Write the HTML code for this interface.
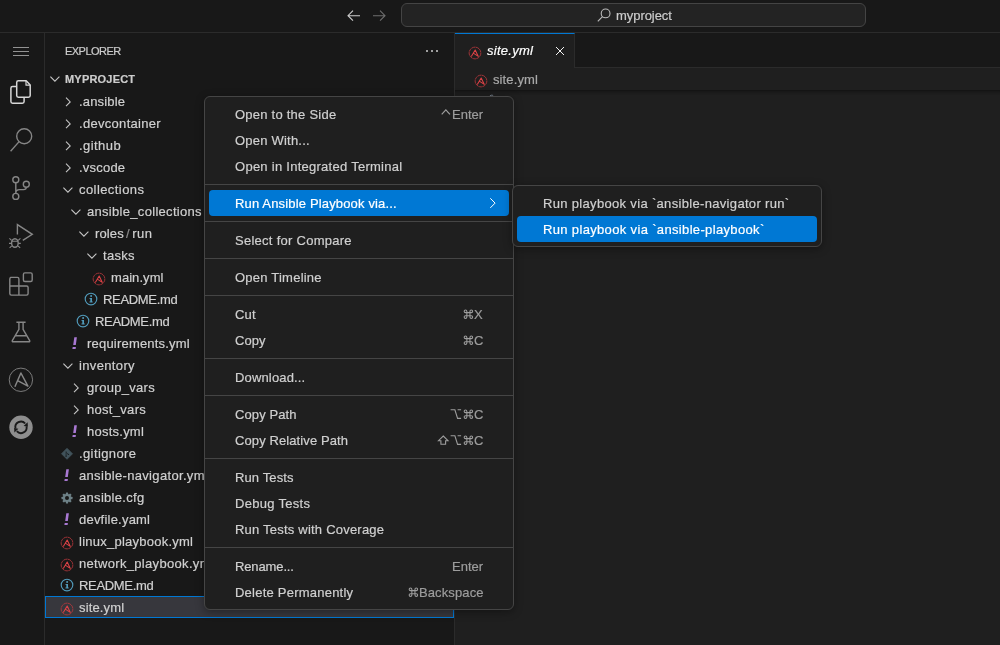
<!DOCTYPE html>
<html><head><meta charset="utf-8">
<style>
*{box-sizing:border-box;margin:0;padding:0}
html,body{width:1000px;height:645px;overflow:hidden;background:#181818;font-family:"Liberation Sans",sans-serif;font-size:13px;color:#ccc}
.t,.l,.g{will-change:transform;-webkit-text-stroke:0.2px}
.abs{position:absolute}
#title{position:absolute;left:0;top:0;width:1000px;height:33px;background:#181818;border-bottom:1px solid #2b2b2b}
#search{position:absolute;left:401px;top:3px;width:465px;height:24px;border:1px solid #444;border-radius:6px;background:#232323}
#search span{position:absolute;left:214.4px;top:4px;font-size:13px;color:#ccc;line-height:15px}
#act{position:absolute;left:0;top:33px;width:45px;height:612px;background:#181818;border-right:1px solid #2b2b2b}
#act svg{position:absolute}
#side{position:absolute;left:45px;top:33px;width:410px;height:612px;background:#181818;border-right:1px solid #2b2b2b}
#ed{position:absolute;left:455px;top:33px;width:545px;height:612px;background:#1f1f1f}
#tabs{position:absolute;left:0;top:0;width:545px;height:35px;background:#181818;border-bottom:1px solid #2b2b2b}
#tab{position:absolute;left:0;top:0;width:120px;height:35px;background:#1f1f1f;border-top:1px solid #0078d4;border-right:1px solid #2b2b2b}
#tab .t{position:absolute;left:32px;top:9px;font-style:italic;color:#fff;font-size:13px;line-height:15px}
#tab svg,#bc svg{position:absolute}
#bc{position:absolute;left:0;top:35px;width:545px;height:22px;background:#1f1f1f;}
#shadow{position:absolute;left:0;top:56px;width:545px;height:6px;box-shadow:inset 0 6px 6px -6px #000}
#bc .t{position:absolute;left:38px;top:4px;color:#a9a9a9;font-size:13px;line-height:15px}
.row{position:absolute;left:0;width:409px;height:22px;line-height:22px;font-size:13px;color:#d0d0d0;white-space:nowrap}
.row.sel{background:#37373d;outline:1px solid #0078d4;outline-offset:-1px}
.row .t{position:absolute;top:1px}
.row svg{position:absolute}
#menu{position:absolute;left:204px;top:96px;width:310px;height:514px;background:#1f1f1f;border:1px solid #454545;border-radius:6px;box-shadow:0 2px 8px rgba(0,0,0,.36)}
#sub{position:absolute;left:512px;top:185px;width:310px;height:62px;background:#1f1f1f;border:1px solid #454545;border-radius:6px;box-shadow:0 2px 8px rgba(0,0,0,.36)}
.mi{position:absolute;left:4px;width:300px;height:26px;line-height:26px;font-size:13px;color:#d0d0d0;border-radius:4px;white-space:nowrap}
.mi .l{position:absolute;left:26px;top:1px}
.mi .k{position:absolute;right:26px;top:0;height:26px;display:flex;align-items:flex-start;color:#9d9d9d}
.mi .k svg{flex:none;display:block}
.mi .k span{display:block;position:relative;top:1px;line-height:26px}
.mi.sel{background:#0078d4;color:#fff}
.sep{position:absolute;left:0;width:308px;height:1px;background:#454545}
</style></head><body>
<div id="title">
<svg class="abs" style="left:346px;top:8px" width="16" height="16" viewBox="0 0 16 16"><path d="M2 7.7 H14 M7 2.7 L2 7.7 L7 12.7" fill="none" stroke="#ccc" stroke-width="1.1"/></svg>
<svg class="abs" style="left:371px;top:8px" width="16" height="16" viewBox="0 0 16 16"><path d="M2 7.7 H14 M9 2.7 L14 7.7 L9 12.7" fill="none" stroke="#6e6e6e" stroke-width="1.1"/></svg>
<div id="search"><svg class="abs" style="left:194.4px;top:2.6px" width="16" height="16" viewBox="0 0 16 16"><circle cx="9.6" cy="6.4" r="4.4" fill="none" stroke="#bbb" stroke-width="1.1"/><path d="M6.5 9.6 L1.8 14.4" stroke="#bbb" stroke-width="1.1"/></svg><span class="g" style="letter-spacing:-0.059px">myproject</span></div>
</div>
<div id="act">
<svg style="left:0;top:0" width="44" height="612" viewBox="0 33 44 612" fill="none">
<!-- hamburger -->
<g stroke="#929292" stroke-width="1"><path d="M13 47.5 H29 M13 51.5 H29 M13 55.5 H29"/></g>
<!-- files (active) -->
<g stroke="#d7d7d7" stroke-width="1.5" stroke-linejoin="round">
<path d="M16.8 86.5 H12.6 Q10.9 86.5 10.9 88.2 V101.6 Q10.9 103.3 12.6 103.3 H22.4 Q24.1 103.3 24.1 101.6 V97.6"/>
<path d="M18.4 80.7 H26.2 L30.2 84.9 V95.6 Q30.2 97.3 28.5 97.3 H18.4 Q16.7 97.3 16.7 95.6 V82.4 Q16.7 80.7 18.4 80.7 Z"/>
<path d="M26 81 V85.2 H30" stroke-width="1.2"/>
</g>
<!-- search -->
<g stroke="#868686" stroke-width="1.4"><circle cx="24.2" cy="136.3" r="7.5"/><path d="M18.9 141.9 L10.6 151.3"/></g>
<!-- scm -->
<g stroke="#868686" stroke-width="1.4"><circle cx="15.8" cy="179.7" r="3"/><circle cx="15.8" cy="196.4" r="3"/><circle cx="26.3" cy="184.3" r="3"/>
<path d="M15.8 182.7 V193.4 M26.3 187.3 Q26.3 189.6 23.6 189.6 H19.6 Q15.8 189.6 15.8 193"/></g>
<!-- debug -->
<g stroke="#868686" stroke-width="1.4" stroke-linejoin="miter"><path d="M17.4 234.6 V224.6 L32.3 234.3 L22.8 240.4"/>
<ellipse cx="14.9" cy="243" rx="3.3" ry="4.3"/><path d="M11.8 241.3 H18 M11.6 240.4 L9.4 238.4 M18.2 240.4 L20.4 238.4 M11.4 243.4 H9 M18.4 243.4 H20.8 M11.8 245.8 L9.6 247.8 M18 245.8 L20.2 247.8" stroke-width="1.1"/></g>
<!-- extensions -->
<g stroke="#868686" stroke-width="1.4" stroke-linejoin="round"><path d="M10.6 277.4 H17.4 Q18.9 277.4 18.9 278.9 V286 H26.6 Q28.1 286 28.1 287.5 V293.6 Q28.1 295.1 26.6 295.1 H11.3 Q9.8 295.1 9.8 293.6 V278.9 Q9.8 277.4 11.3 277.4 Z M9.8 286 H18.9 V295.1"/>
<rect x="23.4" y="272.9" width="8.8" height="8.6" rx="1.5"/></g>
<!-- flask -->
<g stroke="#868686" stroke-width="1.4" stroke-linejoin="round"><path d="M16.4 322.3 H25.6 M18.9 322.3 V329.4 L12.3 340.6 Q11.9 341.8 13.2 341.8 H28.8 Q30.1 341.8 29.7 340.6 L23.1 329.4 V322.3 M14.9 335.8 H27.1"/></g>
<!-- ansible -->
<g stroke="#868686"><circle cx="20.9" cy="379.8" r="11.7" stroke-width="0.9"/><path d="M14.9 386.8 L20.9 373 L27.9 386.2 L17.2 380.4" stroke-width="1.5" stroke-linejoin="round"/></g>
<!-- refresh -->
<circle cx="21" cy="427.3" r="11.7" fill="#8e8e8e"/>
<g stroke="#1a1a1a" stroke-width="1.9" fill="none"><path d="M15.5 428.4 A5.6 5.6 0 0 1 25.2 423.5"/><path d="M26.5 426.2 A5.6 5.6 0 0 1 16.8 431.1"/></g>
<path d="M23.6 425.9 L27.9 426.6 L27.6 422.2 Z M18.4 428.7 L14.1 428 L14.4 432.4 Z" fill="#1a1a1a"/>
</svg>

</div>
<div id="side">
<div class="abs g" style="left:20px;top:12px;font-size:11px;line-height:13px;color:#ccc;letter-spacing:-0.538px">EXPLORER</div>
<svg class="abs" style="left:380px;top:16px" width="14" height="4" viewBox="0 0 14 4"><circle cx="2" cy="2" r="1" fill="#ccc"/><circle cx="7" cy="2" r="1" fill="#ccc"/><circle cx="12" cy="2" r="1" fill="#ccc"/></svg>
<svg class="abs" style="left:3.6px;top:42px" width="12" height="8" viewBox="0 0 12 8"><path d="M1.4 1.6 L5.9 6.1 L10.4 1.6" fill="none" stroke="#c5c5c5" stroke-width="1.1"/></svg>
<div class="abs g" style="left:20px;top:40px;font-size:11px;line-height:13px;color:#ccc;font-weight:bold;letter-spacing:0.196px">MYPROJECT</div>
<div class="row" style="top:57px"><svg width="8" height="12" viewBox="0 0 8 12" style="left:19px;top:6px"><path d="M2 1.7 L6.2 5.9 L2 10.1" fill="none" stroke="#c5c5c5" stroke-width="1.1"/></svg><span class="t" style="left:34px;letter-spacing:0.179px">.ansible</span></div>
<div class="row" style="top:79px"><svg width="8" height="12" viewBox="0 0 8 12" style="left:19px;top:6px"><path d="M2 1.7 L6.2 5.9 L2 10.1" fill="none" stroke="#c5c5c5" stroke-width="1.1"/></svg><span class="t" style="left:34px;letter-spacing:0.3px">.devcontainer</span></div>
<div class="row" style="top:101px"><svg width="8" height="12" viewBox="0 0 8 12" style="left:19px;top:6px"><path d="M2 1.7 L6.2 5.9 L2 10.1" fill="none" stroke="#c5c5c5" stroke-width="1.1"/></svg><span class="t" style="left:34px;letter-spacing:0.433px">.github</span></div>
<div class="row" style="top:123px"><svg width="8" height="12" viewBox="0 0 8 12" style="left:19px;top:6px"><path d="M2 1.7 L6.2 5.9 L2 10.1" fill="none" stroke="#c5c5c5" stroke-width="1.1"/></svg><span class="t" style="left:34px;letter-spacing:0.208px">.vscode</span></div>
<div class="row" style="top:145px"><svg width="12" height="8" viewBox="0 0 12 8" style="left:17px;top:8px"><path d="M1.4 1.6 L5.9 6.1 L10.4 1.6" fill="none" stroke="#c5c5c5" stroke-width="1.1"/></svg><span class="t" style="left:34px;letter-spacing:0.425px">collections</span></div>
<div class="row" style="top:167px"><svg width="12" height="8" viewBox="0 0 12 8" style="left:25px;top:8px"><path d="M1.4 1.6 L5.9 6.1 L10.4 1.6" fill="none" stroke="#c5c5c5" stroke-width="1.1"/></svg><span class="t" style="left:42px;letter-spacing:0.304px">ansible_collections</span></div>
<div class="row" style="top:189px"><svg width="12" height="8" viewBox="0 0 12 8" style="left:33px;top:8px"><path d="M1.4 1.6 L5.9 6.1 L10.4 1.6" fill="none" stroke="#c5c5c5" stroke-width="1.1"/></svg><span class="t" style="left:50px;"><span style="letter-spacing:0.119px">roles</span><span style="color:#8c8c8c;margin:0 2.6px 0 2.2px">/</span><span style="letter-spacing:0.525px">run</span></span></div>
<div class="row" style="top:211px"><svg width="12" height="8" viewBox="0 0 12 8" style="left:41px;top:8px"><path d="M1.4 1.6 L5.9 6.1 L10.4 1.6" fill="none" stroke="#c5c5c5" stroke-width="1.1"/></svg><span class="t" style="left:58px;letter-spacing:0.306px">tasks</span></div>
<div class="row" style="top:233px"><svg width="14" height="14" viewBox="0 0 14 14" style="left:47px;top:5.8px"><circle cx="7" cy="7" r="5.85" fill="none" stroke="#b5373c" stroke-width="0.85" stroke-dasharray="3.6 0.35"/><path d="M3.3 10.6 L7.2 4 L10.3 10.4 L5.7 7.4" fill="none" stroke="#dd4246" stroke-width="1.05" stroke-linejoin="round"/></svg><span class="t" style="left:66px;letter-spacing:0.057px">main.yml</span></div>
<div class="row" style="top:255px"><svg width="14" height="14" viewBox="0 0 14 14" style="left:39px;top:4.4px"><circle cx="7" cy="7" r="5.8" fill="none" stroke="#519aba" stroke-width="1.15"/><rect x="6.3" y="6" width="1.7" height="4.2" fill="#519aba"/><rect x="5.4" y="9.5" width="3.4" height="0.9" fill="#519aba"/><rect x="5.5" y="6" width="1.5" height="0.9" fill="#519aba"/><circle cx="7.1" cy="4.1" r="1" fill="#519aba"/></svg><span class="t" style="left:58px;letter-spacing:-0.331px">README.md</span></div>
<div class="row" style="top:277px"><svg width="14" height="14" viewBox="0 0 14 14" style="left:31px;top:4.4px"><circle cx="7" cy="7" r="5.8" fill="none" stroke="#519aba" stroke-width="1.15"/><rect x="6.3" y="6" width="1.7" height="4.2" fill="#519aba"/><rect x="5.4" y="9.5" width="3.4" height="0.9" fill="#519aba"/><rect x="5.5" y="6" width="1.5" height="0.9" fill="#519aba"/><circle cx="7.1" cy="4.1" r="1" fill="#519aba"/></svg><span class="t" style="left:50px;letter-spacing:-0.331px">README.md</span></div>
<div class="row" style="top:299px"><svg width="8" height="14" viewBox="0 0 8 14" style="left:25.2px;top:5px"><path d="M4.3 0.3 L6.9 0.3 L5.8 8 L3.2 8 Z M2.7 10.1 L5.9 10.1 L5.6 11.9 L2.4 11.9 Z" fill="#a878d2"/></svg><span class="t" style="left:42px;letter-spacing:0.203px">requirements.yml</span></div>
<div class="row" style="top:321px"><svg width="12" height="8" viewBox="0 0 12 8" style="left:17px;top:8px"><path d="M1.4 1.6 L5.9 6.1 L10.4 1.6" fill="none" stroke="#c5c5c5" stroke-width="1.1"/></svg><span class="t" style="left:34px;letter-spacing:0.356px">inventory</span></div>
<div class="row" style="top:343px"><svg width="8" height="12" viewBox="0 0 8 12" style="left:27px;top:6px"><path d="M2 1.7 L6.2 5.9 L2 10.1" fill="none" stroke="#c5c5c5" stroke-width="1.1"/></svg><span class="t" style="left:42px;letter-spacing:0.289px">group_vars</span></div>
<div class="row" style="top:365px"><svg width="8" height="12" viewBox="0 0 8 12" style="left:27px;top:6px"><path d="M2 1.7 L6.2 5.9 L2 10.1" fill="none" stroke="#c5c5c5" stroke-width="1.1"/></svg><span class="t" style="left:42px;letter-spacing:0.303px">host_vars</span></div>
<div class="row" style="top:387px"><svg width="8" height="14" viewBox="0 0 8 14" style="left:25.2px;top:5px"><path d="M4.3 0.3 L6.9 0.3 L5.8 8 L3.2 8 Z M2.7 10.1 L5.9 10.1 L5.6 11.9 L2.4 11.9 Z" fill="#a878d2"/></svg><span class="t" style="left:42px;letter-spacing:0.241px">hosts.yml</span></div>
<div class="row" style="top:409px"><svg width="14" height="14" viewBox="0 0 14 14" style="left:14.5px;top:4.8px"><path d="M7 1.3 L12.5 6.8 L7 12.3 L1.5 6.8 Z" fill="#41535b" stroke="#41535b" stroke-width="0.8" stroke-linejoin="round"/><path d="M6.1 4.4 V9.2 M6.1 5.4 L8.4 7.4" stroke="#1b2226" stroke-width="0.8" fill="none"/><circle cx="6.1" cy="9.2" r="0.7" fill="#1b2226"/><circle cx="8.4" cy="7.4" r="0.7" fill="#1b2226"/></svg><span class="t" style="left:34px;letter-spacing:0.389px">.gitignore</span></div>
<div class="row" style="top:431px"><svg width="8" height="14" viewBox="0 0 8 14" style="left:17px;top:5px"><path d="M4.3 0.3 L6.9 0.3 L5.8 8 L3.2 8 Z M2.7 10.1 L5.9 10.1 L5.6 11.9 L2.4 11.9 Z" fill="#a878d2"/></svg><span class="t" style="left:34px;letter-spacing:0.329px">ansible-navigator.yml</span></div>
<div class="row" style="top:453px"><svg width="14" height="14" viewBox="0 0 14 14" style="left:14.5px;top:4.5px"><g fill="#6d8086"><circle cx="7" cy="7" r="4.1"/><rect x="5.85" y="1.5" width="2.3" height="11" rx="0.5" transform="rotate(0 7 7)"/><rect x="5.85" y="1.5" width="2.3" height="11" rx="0.5" transform="rotate(45 7 7)"/><rect x="5.85" y="1.5" width="2.3" height="11" rx="0.5" transform="rotate(90 7 7)"/><rect x="5.85" y="1.5" width="2.3" height="11" rx="0.5" transform="rotate(135 7 7)"/></g><circle cx="7" cy="7" r="2" fill="#181818"/></svg><span class="t" style="left:34px;letter-spacing:0.308px">ansible.cfg</span></div>
<div class="row" style="top:475px"><svg width="8" height="14" viewBox="0 0 8 14" style="left:17px;top:5px"><path d="M4.3 0.3 L6.9 0.3 L5.8 8 L3.2 8 Z M2.7 10.1 L5.9 10.1 L5.6 11.9 L2.4 11.9 Z" fill="#a878d2"/></svg><span class="t" style="left:34px;letter-spacing:0.216px">devfile.yaml</span></div>
<div class="row" style="top:497px"><svg width="14" height="14" viewBox="0 0 14 14" style="left:15px;top:5.8px"><circle cx="7" cy="7" r="5.85" fill="none" stroke="#b5373c" stroke-width="0.85" stroke-dasharray="3.6 0.35"/><path d="M3.3 10.6 L7.2 4 L10.3 10.4 L5.7 7.4" fill="none" stroke="#dd4246" stroke-width="1.05" stroke-linejoin="round"/></svg><span class="t" style="left:34px;letter-spacing:0.243px">linux_playbook.yml</span></div>
<div class="row" style="top:519px"><svg width="14" height="14" viewBox="0 0 14 14" style="left:15px;top:5.8px"><circle cx="7" cy="7" r="5.85" fill="none" stroke="#b5373c" stroke-width="0.85" stroke-dasharray="3.6 0.35"/><path d="M3.3 10.6 L7.2 4 L10.3 10.4 L5.7 7.4" fill="none" stroke="#dd4246" stroke-width="1.05" stroke-linejoin="round"/></svg><span class="t" style="left:34px;letter-spacing:0.32px">network_playbook.yml</span></div>
<div class="row" style="top:541px"><svg width="14" height="14" viewBox="0 0 14 14" style="left:15px;top:4.4px"><circle cx="7" cy="7" r="5.8" fill="none" stroke="#519aba" stroke-width="1.15"/><rect x="6.3" y="6" width="1.7" height="4.2" fill="#519aba"/><rect x="5.4" y="9.5" width="3.4" height="0.9" fill="#519aba"/><rect x="5.5" y="6" width="1.5" height="0.9" fill="#519aba"/><circle cx="7.1" cy="4.1" r="1" fill="#519aba"/></svg><span class="t" style="left:34px;letter-spacing:-0.331px">README.md</span></div>
<div class="row sel" style="top:563px"><svg width="14" height="14" viewBox="0 0 14 14" style="left:15px;top:5.8px"><circle cx="7" cy="7" r="5.85" fill="none" stroke="#b5373c" stroke-width="0.85" stroke-dasharray="3.6 0.35"/><path d="M3.3 10.6 L7.2 4 L10.3 10.4 L5.7 7.4" fill="none" stroke="#dd4246" stroke-width="1.05" stroke-linejoin="round"/></svg><span class="t" style="left:34px;letter-spacing:0.143px">site.yml</span></div>
</div>
<div id="ed">
<div id="tabs"><div id="tab"><svg width="14" height="14" viewBox="0 0 14 14" style="left:12.6px;top:11.7px"><circle cx="7" cy="7" r="5.85" fill="none" stroke="#b5373c" stroke-width="0.85" stroke-dasharray="3.6 0.35"/><path d="M3.3 10.6 L7.2 4 L10.3 10.4 L5.7 7.4" fill="none" stroke="#dd4246" stroke-width="1.05" stroke-linejoin="round"/></svg><span class="t" style="letter-spacing:0.261px">site.yml</span>
<svg style="left:100px;top:11.9px" width="10" height="10" viewBox="0 0 10 10"><path d="M1 1 L9 9 M9 1 L1 9" stroke="#fff" stroke-width="0.95"/></svg></div></div>
<div id="shadow"></div><svg class="abs" style="left:33px;top:60.6px" width="8" height="4" viewBox="0 0 8 4"><path d="M1.3 3.8 Q1.6 1.2 3.6 1.2 Q4.6 1.2 5.2 1.7" fill="none" stroke="#7b8794" stroke-width="1"/></svg>
<div id="bc"><svg width="14" height="14" viewBox="0 0 14 14" style="left:18.8px;top:5.7px"><circle cx="7" cy="7" r="5.85" fill="none" stroke="#b5373c" stroke-width="0.85" stroke-dasharray="3.6 0.35"/><path d="M3.3 10.6 L7.2 4 L10.3 10.4 L5.7 7.4" fill="none" stroke="#dd4246" stroke-width="1.05" stroke-linejoin="round"/></svg><span class="t" style="letter-spacing:0.114px">site.yml</span></div>
</div>
<div id="menu">
<div class="mi" style="top:4px"><span class="l" style="letter-spacing:0.238px">Open to the Side</span><div class="k"><svg width="10.6" height="26" viewBox="0 0 10.6 26"><path d="M0.7 13.4 L4.85 8.9 L9 13.4" fill="none" stroke="#9d9d9d" stroke-width="1.2"/></svg><span class="g">Enter</span></div></div>
<div class="mi" style="top:30px"><span class="l" style="letter-spacing:0.214px">Open With...</span></div>
<div class="mi" style="top:56px"><span class="l" style="letter-spacing:0.267px">Open in Integrated Terminal</span></div>
<div class="sep" style="top:87px"></div>
<div class="mi sel" style="top:93px"><span class="l" style="letter-spacing:0.158px">Run Ansible Playbook via...</span><svg width="8" height="12" viewBox="0 0 8 12" style="position:absolute;left:280px;top:7px"><path d="M1.3 1.3 L6.1 6.1 L1.3 10.9" fill="none" stroke="#fff" stroke-width="1"/></svg></div>
<div class="sep" style="top:124px"></div>
<div class="mi" style="top:130px"><span class="l" style="letter-spacing:0.271px">Select for Compare</span></div>
<div class="sep" style="top:161px"></div>
<div class="mi" style="top:167px"><span class="l" style="letter-spacing:0.227px">Open Timeline</span></div>
<div class="sep" style="top:198px"></div>
<div class="mi" style="top:204px"><span class="l" style="letter-spacing:0.175px">Cut</span><div class="k"><svg width="11" height="26" viewBox="0 0 11 26"><path d="M3.85 11.6 V10.25 A1.35 1.35 0 1 0 2.5 11.6 H8.3 A1.35 1.35 0 1 0 6.95 10.25 V16.05 A1.35 1.35 0 1 0 8.3 14.7 H2.5 A1.35 1.35 0 1 0 3.85 16.05 Z" fill="none" stroke="#9d9d9d" stroke-width="1.05"/></svg><span class="g">X</span></div></div>
<div class="mi" style="top:230px"><span class="l" style="letter-spacing:0.075px">Copy</span><div class="k"><svg width="11" height="26" viewBox="0 0 11 26"><path d="M3.85 11.6 V10.25 A1.35 1.35 0 1 0 2.5 11.6 H8.3 A1.35 1.35 0 1 0 6.95 10.25 V16.05 A1.35 1.35 0 1 0 8.3 14.7 H2.5 A1.35 1.35 0 1 0 3.85 16.05 Z" fill="none" stroke="#9d9d9d" stroke-width="1.05"/></svg><span class="g">C</span></div></div>
<div class="sep" style="top:261px"></div>
<div class="mi" style="top:267px"><span class="l" style="letter-spacing:0.158px">Download...</span></div>
<div class="sep" style="top:298px"></div>
<div class="mi" style="top:304px"><span class="l" style="letter-spacing:0.106px">Copy Path</span><div class="k"><svg width="12.7" height="26" viewBox="0 0 12.7 26"><path d="M0.6 8.8 H4.9 L7.6 17.4 H11.1 M7.6 8.8 H11.1" fill="none" stroke="#9d9d9d" stroke-width="1.1"/></svg><svg width="11" height="26" viewBox="0 0 11 26"><path d="M3.85 11.6 V10.25 A1.35 1.35 0 1 0 2.5 11.6 H8.3 A1.35 1.35 0 1 0 6.95 10.25 V16.05 A1.35 1.35 0 1 0 8.3 14.7 H2.5 A1.35 1.35 0 1 0 3.85 16.05 Z" fill="none" stroke="#9d9d9d" stroke-width="1.05"/></svg><span class="g">C</span></div></div>
<div class="mi" style="top:330px"><span class="l" style="letter-spacing:0.103px">Copy Relative Path</span><div class="k"><svg width="12.75" height="26" viewBox="0 0 12.75 26"><path d="M6.25 9 L11 13.7 H8.6 V17.3 H3.9 V13.7 H1.5 Z" fill="none" stroke="#9d9d9d" stroke-width="1.1" stroke-linejoin="miter"/></svg><svg width="12.7" height="26" viewBox="0 0 12.7 26"><path d="M0.6 8.8 H4.9 L7.6 17.4 H11.1 M7.6 8.8 H11.1" fill="none" stroke="#9d9d9d" stroke-width="1.1"/></svg><svg width="11" height="26" viewBox="0 0 11 26"><path d="M3.85 11.6 V10.25 A1.35 1.35 0 1 0 2.5 11.6 H8.3 A1.35 1.35 0 1 0 6.95 10.25 V16.05 A1.35 1.35 0 1 0 8.3 14.7 H2.5 A1.35 1.35 0 1 0 3.85 16.05 Z" fill="none" stroke="#9d9d9d" stroke-width="1.05"/></svg><span class="g">C</span></div></div>
<div class="sep" style="top:361px"></div>
<div class="mi" style="top:367px"><span class="l" style="letter-spacing:0.122px">Run Tests</span></div>
<div class="mi" style="top:393px"><span class="l" style="letter-spacing:0.3px">Debug Tests</span></div>
<div class="mi" style="top:419px"><span class="l" style="letter-spacing:0.216px">Run Tests with Coverage</span></div>
<div class="sep" style="top:450px"></div>
<div class="mi" style="top:456px"><span class="l" style="letter-spacing:-0.125px">Rename...</span><div class="k"><span class="g">Enter</span></div></div>
<div class="mi" style="top:482px"><span class="l" style="letter-spacing:0.228px">Delete Permanently</span><div class="k"><svg width="11" height="26" viewBox="0 0 11 26"><path d="M3.85 11.6 V10.25 A1.35 1.35 0 1 0 2.5 11.6 H8.3 A1.35 1.35 0 1 0 6.95 10.25 V16.05 A1.35 1.35 0 1 0 8.3 14.7 H2.5 A1.35 1.35 0 1 0 3.85 16.05 Z" fill="none" stroke="#9d9d9d" stroke-width="1.05"/></svg><span class="g" style="letter-spacing:.11px;margin-right:-.11px">Backspace</span></div></div>
</div>
<div id="sub">
<div class="mi" style="top:4px"><span class="l" style="letter-spacing:0.326px">Run playbook via `ansible-navigator run`</span></div>
<div class="mi sel" style="top:30px"><span class="l" style="letter-spacing:0.343px">Run playbook via `ansible-playbook`</span></div>
</div>
</body></html>
